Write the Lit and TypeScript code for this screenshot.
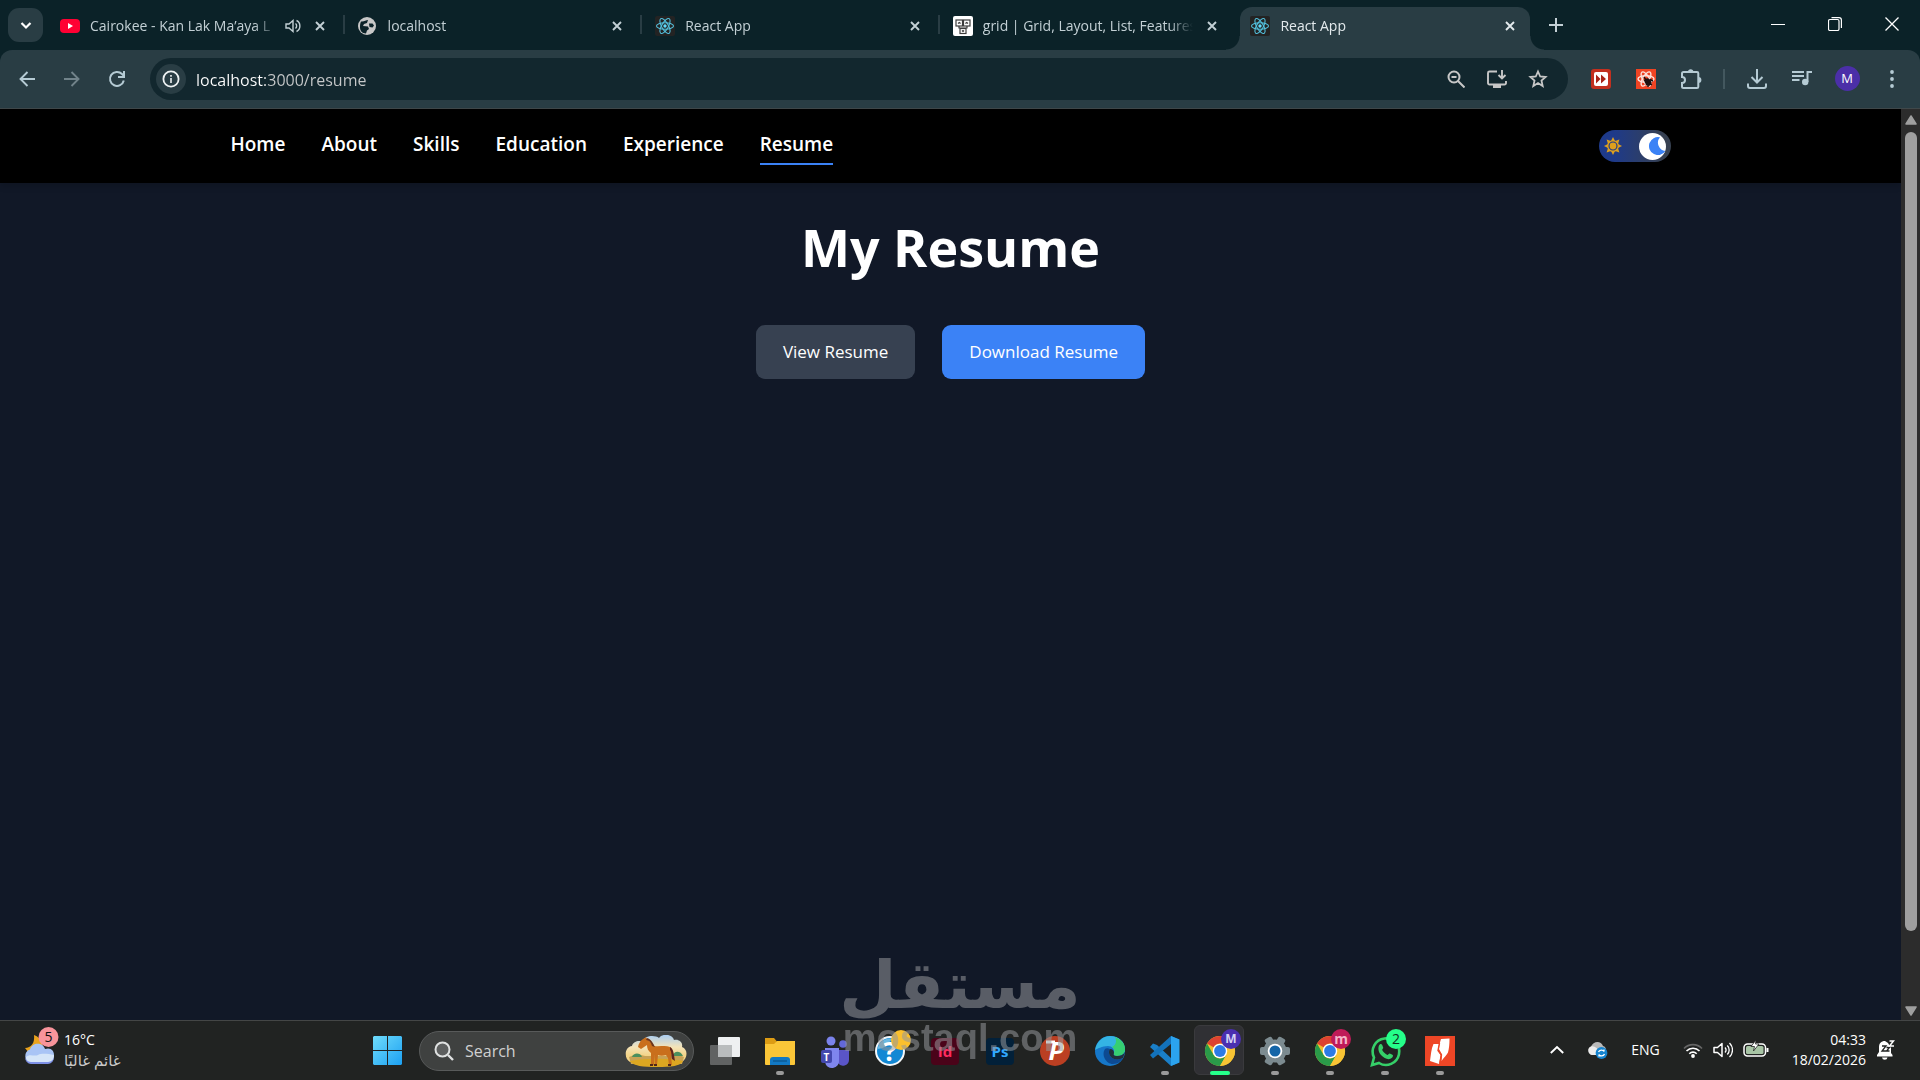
import { LitElement, html, svg, css, TemplateResult } from "lit";
import { customElement, property, state } from "lit/decorators.js";
import { classMap } from "lit/directives/class-map.js";

const icon = (size: number, box: string, body: unknown, height = size) =>
  html`<svg class="icon" width=${size} height=${height} viewBox=${box} fill="none" aria-hidden="true">${body}</svg>`;

const close = icon(12, "0 0 12 12", svg`<path d="M2 2l8 8M10 2l-8 8" stroke="currentColor" stroke-width="1.9"/>`);

const youtube = icon(20, "0 0 20 20", svg`<rect y="3" width="20" height="14" rx="4" fill="#ff0033"/><path d="M8 7l5 3-5 3z" fill="#fff"/>`);

const globe = icon(20, "0 0 20 18", svg`
  <circle cx="9" cy="9" r="9" fill="#c7c7c7"/>
  <path d="M3 4.500c3 .5 5-1.500 7-1.500l-1 3-3 1-1 2 5 .5 1 2.500-2 1.500-1 3c-4 0-6-3-6-6 0-2 0-4 1-6z" fill="#0b2228"/>
  <path d="M11 6.500l3.500 0 1.500 2-1.500 2-3-.5z" fill="#0b2228"/>`, 18);

const react = icon(20, "0 0 20 20", svg`
  <rect width="20" height="20" rx="2" fill="#232323"/>
  <g stroke="#53c1de" stroke-width="1.1">
    <ellipse cx="10" cy="10" rx="8.500" ry="3.300"/>
    <ellipse cx="10" cy="10" rx="8.500" ry="3.300" transform="rotate(60 10 10)"/>
    <ellipse cx="10" cy="10" rx="8.500" ry="3.300" transform="rotate(120 10 10)"/>
  </g><circle cx="10" cy="10" r="1.700" fill="#61dafb"/>`);

const gridFav = icon(20, "0 0 20 20", svg`
  <rect width="20" height="20" rx="2" fill="#fff"/>
  <g stroke="#3c3c3c" stroke-width="1.200">
    <rect x="3" y="4" width="6.500" height="6"/><rect x="10.500" y="4" width="6.500" height="6"/>
    <rect x="7" y="12.500" width="6" height="5"/><path d="M5 7.500l1.300-1 1.300 1M12.400 7.500l1.300-1 1.300 1M9 14.500l1 1 1-1M6 10v2h8v-2"/>
  </g>`);

const speaker = icon(16, "0 0 16 16", svg`
  <path d="M1 6h3l4-3.500v11L4 10H1z" stroke="currentColor" stroke-width="1.400"/>
  <path d="M10.500 5.500c1.500 1.200 1.500 3.800 0 5M11.500 2.500c4.500 2 4.500 9 0 11" stroke="currentColor" stroke-width="1.400"/>`);

interface Tab { title: string; icon: TemplateResult; audio?: boolean }

const TABS: Tab[] = [
  { title: "Cairokee - Kan Lak Ma’aya L", icon: youtube, audio: true },
  { title: "localhost", icon: globe },
  { title: "React App", icon: react },
  { title: "grid | Grid, Layout, List, Features", icon: gridFav },
  { title: "React App", icon: react },
];

const shared = css`
  *, *::before, *::after { box-sizing: border-box; }
  button { font: inherit; color: inherit; background: none; border: 0; padding: 0; margin: 0; }
  .icon { display: block; flex: none; }
`;

@customElement("browser-tabs")
class BrowserTabs extends LitElement {
  @state() private active = 4;

  static styles = [shared, css`
    :host { display: flex; height: 50px; padding-left: 8px; background: #0b2228; color: #c3d0d5; }
    .list-button { width: 35px; height: 34px; margin: 8px 7px 8px 0; border-radius: 11px; background: #293d44; display: grid; place-items: center; color: #fff; }
    .tabs { flex: 0 1 1480px; min-width: 0; display: flex; gap: 8px; padding-top: 7px; }
    .tab { position: relative; flex: 1 1 0; min-width: 0; display: flex; align-items: center; gap: 7px; padding: 0 8px 6px 10px; }
    .tab:not(.active):not(.before)::after { content: ""; position: absolute; right: -5px; top: 8px; width: 2px; height: 19px; background: #293d44; }
    .active { background: #293d44; border-radius: 12px 12px 0 0; color: #e3eaed; }
    .active::before, .active::after { content: ""; position: absolute; bottom: 0; width: 14px; height: 14px; }
    .active::before { left: -14px; background: radial-gradient(circle at 0 0, transparent 13px, #293d44 14px); }
    .active::after { right: -14px; background: radial-gradient(circle at 100% 0, transparent 13px, #293d44 14px); }
    .pick { flex: 1; min-width: 0; display: flex; align-items: center; gap: 10px; text-align: left; font-size: 14px; line-height: 20px; }
    .title { flex: 1; min-width: 0; overflow: hidden; white-space: nowrap; mask-image: linear-gradient(90deg, #000 calc(100% - 24px), transparent); }
    .close { width: 24px; height: 24px; display: grid; place-items: center; }
    .new { width: 36px; height: 50px; margin-left: 8px; display: grid; place-items: center; }
    .window { margin-left: auto; display: flex; color: #fff; }
    .window button { width: 57px; height: 48px; display: grid; place-items: center; }
  `];

  render() {
    return html`
      <button class="list-button" aria-label="Search tabs">${icon(12, "0 0 12 12", svg`<path d="M1.500 4L6 8.500 10.500 4" stroke="currentColor" stroke-width="2.200"/>`)}</button>
      <div class="tabs">
        ${TABS.map((tab, i) => html`
          <div class=${classMap({ tab: true, active: i === this.active, before: i === this.active - 1 })}>
            <button class="pick" @click=${() => (this.active = i)}>
              ${tab.icon}<span class="title">${tab.title}</span>
            </button>
            ${tab.audio ? html`<button aria-label="Mute tab">${speaker}</button>` : null}
            <button class="close" aria-label="Close tab">${close}</button>
          </div>`)}
      </div>
      <button class="new" aria-label="New tab">${icon(14, "0 0 14 14", svg`<path d="M7 0v14M0 7h14" stroke="currentColor" stroke-width="2"/>`)}</button>
      <div class="window">
        <button aria-label="Minimise">${icon(14, "0 0 14 14", svg`<path d="M0 7.500h14" stroke="currentColor"/>`)}</button>
        <button aria-label="Restore">${icon(14, "0 0 14 14", svg`<rect x=".5" y="2.500" width="10.500" height="11" rx="1.500" stroke="currentColor" stroke-width="1.200"/><path d="M3.500.6h7.500c1.500 0 2.400 1 2.400 2.400V11" stroke="currentColor" stroke-width="1.200"/>`)}</button>
        <button aria-label="Close window">${icon(14, "0 0 14 14", svg`<path d="M.5.5l13 13M13.500.5l-13 13" stroke="currentColor" stroke-width="1.300"/>`)}</button>
      </div>`;
  }
}

@customElement("browser-toolbar")
class BrowserToolbar extends LitElement {
  static styles = [shared, css`
    :host { display: block; background: #0b2228; }
    .bar { display: flex; align-items: center; gap: 9px; height: 59px; padding: 0 10px 1px 9px; background: #293d44; border-bottom: 1px solid #40484a; border-radius: 12px 12px 0 0; color: #b5cbd4; }
    .tool { flex: none; width: 36px; height: 36px; display: grid; place-items: center; }
    .off { color: #71838a; }
    .omnibox { flex: 1; min-width: 0; height: 42px; margin: 0 6px; padding: 0 10px 0 6px; display: flex; align-items: center; border-radius: 21px; background: #12272e; color: #c7c7c7; }
    .info { width: 30px; height: 30px; border-radius: 50%; display: grid; place-items: center; background: #293d44; color: #eef2f3; }
    .url { flex: 1; min-width: 0; height: 32px; margin-left: 10px; padding: 2px 0 0; border: 0; outline: 0; font: inherit; font-size: 16px; color: transparent; background: linear-gradient(90deg, #fff 69px, #c7c9ca 69px); background-clip: text; }
    .action { width: 41px; height: 36px; display: grid; place-items: center; }
    .rule { flex: none; width: 2px; height: 20px; margin: 0 5px; background: #43585f; }
    .avatar { width: 25px; height: 25px; border-radius: 50%; background: #4b2fa8; color: #fff; font-size: 13px; line-height: 25px; text-align: center; }
  `];

  render() {
    return html`<div class="bar">
      <button class="tool" aria-label="Back">${icon(16, "0 0 16 16", svg`<path d="M16 8H2M8.500 1L1.500 8l7 7" stroke="currentColor" stroke-width="1.900"/>`)}</button>
      <button class="tool off" aria-label="Forward">${icon(16, "0 0 16 16", svg`<path d="M0 8h14M7.500 1l7 7-7 7" stroke="currentColor" stroke-width="1.900"/>`)}</button>
      <button class="tool" aria-label="Reload">${icon(18, "0 0 18 18", svg`<path d="M15.800 10.500A7 7 0 1 1 14 4l2 2" stroke="currentColor" stroke-width="2"/><path d="M16 1v6h-6" stroke="currentColor" stroke-width="2"/>`)}</button>
      <div class="omnibox">
        <button class="info" aria-label="Site information">${icon(18, "0 0 18 18", svg`<circle cx="9" cy="9" r="7.600" stroke="currentColor" stroke-width="1.800"/><path d="M9 8v5M9 5v1.800" stroke="currentColor" stroke-width="1.600"/>`)}</button>
        <input class="url" type="text" aria-label="Address" value="localhost:3000/resume" spellcheck="false" />
        <button class="action" aria-label="Zoom">${icon(18, "0 0 18 18", svg`<circle cx="7" cy="7" r="5.500" stroke="currentColor" stroke-width="2"/><path d="M11 11l6.500 6.500M4.500 7h5" stroke="currentColor" stroke-width="2"/>`)}</button>
        <button class="action" aria-label="Install app">${icon(22, "0 0 22 20", svg`<path d="M11 2.500H3.500A1.500 1.500 0 0 0 2 4v10a1.500 1.500 0 0 0 1.500 1.500h15A1.500 1.500 0 0 0 20 14v-2M16 1v8M12.500 6L16 9.500 19.500 6" stroke="currentColor" stroke-width="1.900"/><path d="M7 15h8v4H7z" fill="currentColor"/>`, 20)}</button>
        <button class="action" aria-label="Bookmark">${icon(20, "0 0 20 20", svg`<path d="M10 2.500l2.200 5 5.400.5-4.100 3.600 1.200 5.400-4.700-2.900L5.300 17l1.200-5.400L2.400 8l5.400-.5z" stroke="currentColor" stroke-width="1.800"/>`)}</button>
      </div>
      <button class="tool" aria-label="Video speed extension">${icon(20, "0 0 20 20", svg`<rect width="20" height="20" rx="3" fill="#c2301f"/><rect x="3" y="3" width="14" height="14" rx="2" fill="#fff"/><path d="M5 5.500l4.500 4.500L5 14.500zM10 5.500l5 4.500-5 4.500z" fill="#a82418"/>`)}</button>
      <button class="tool" aria-label="React developer tools">${icon(22, "0 0 22 22", svg`
        <rect x="1" y="1" width="20" height="20" fill="#ef4423"/>
        <g stroke="#fbe3dd" stroke-width="1.400"><ellipse cx="11" cy="11" rx="8" ry="3.300"/><ellipse cx="11" cy="11" rx="8" ry="3.300" transform="rotate(60 11 11)"/><ellipse cx="11" cy="11" rx="8" ry="3.300" transform="rotate(120 11 11)"/></g>
        <ellipse cx="13" cy="14" rx="3" ry="4" transform="rotate(-35 13 14)" fill="#1c1111"/><path d="M9 12l8 5M11 17l5-6M9 9l2 3M12 18l2 0M16 12l2 1" stroke="#1c1111" stroke-width="1.400"/>`)}</button>
      <button class="tool" aria-label="Extensions">${icon(22, "0 0 22 22", svg`<path d="M2 5.500A1.500 1.500 0 0 1 3.500 4H17a1.300 1.300 0 0 1 1.300 1.300v13.400A1.300 1.300 0 0 1 17 20H3.500A1.500 1.500 0 0 1 2 18.500V15c4 0 4-6 0-6z" stroke="currentColor" stroke-width="2"/><path d="M8 4a2.700 2.700 0 0 1 5.400 0zM18.500 9a2.900 2.900 0 0 1 0 5.800z" fill="currentColor"/>`)}</button>
      <span class="rule"></span>
      <button class="tool" aria-label="Downloads">${icon(20, "0 0 20 20", svg`<path d="M10 0v13M4.500 8l5.500 5.500L15.500 8M1 14.500V17a2 2 0 0 0 2 2h14a2 2 0 0 0 2-2v-2.500" stroke="currentColor" stroke-width="2"/>`)}</button>
      <button class="tool" aria-label="Media controls">${icon(20, "0 0 20 20", svg`<path d="M0 3h12M0 7h12M0 11h7.500M15.500 13V3H20" stroke="currentColor" stroke-width="2"/><circle cx="13.200" cy="13" r="3.200" fill="currentColor"/>`)}</button>
      <button class="tool" aria-label="Profile"><span class="avatar">M</span></button>
      <button class="tool" aria-label="Menu">${icon(4, "0 0 4 18", svg`<circle cx="2" cy="2" r="1.900" fill="currentColor"/><circle cx="2" cy="9" r="1.900" fill="currentColor"/><circle cx="2" cy="16" r="1.900" fill="currentColor"/>`, 18)}</button>
    </div>`;
  }
}

@customElement("resume-page")
class ResumePage extends LitElement {
  @state() private dark = true;

  static styles = [shared, css`
    :host { display: flex; min-width: 0; background: #111827; color: #fff; }
    .page { flex: 1; min-width: 0; }
    .nav { background: #000; box-shadow: 0 4px 6px rgba(0, 0, 0, 0.12); }
    .inner { max-width: 1440px; margin: 0 auto; padding: 21px 0 18px; display: flex; justify-content: space-between; align-items: flex-start; }
    .links { display: flex; gap: 36px; margin: 0; padding: 0; list-style: none; }
    .link { display: block; padding-bottom: 5px; border-bottom: 2px solid transparent; font-size: 19px; line-height: 28px; font-weight: 600; color: #fff; text-decoration: none; }
    .current { border-color: #3b82f6; }
    .switch { position: relative; display: flex; align-items: center; width: 72px; height: 32px; padding: 0 5px; border-radius: 16px; background: linear-gradient(90deg, #1e3a8a 20%, #374151 90%); }
    .check { position: absolute; inset: 0; width: 100%; height: 100%; margin: 0; opacity: 0; }
    .knob { margin-left: auto; width: 27px; height: 27px; border-radius: 50%; background: #fff; display: grid; place-items: center end; overflow: hidden; }
    .main { display: flex; flex-direction: column; align-items: center; padding: 32px 24px; }
    .heading { margin: 0; font-size: 52px; line-height: 64px; font-weight: 700; }
    .actions { display: flex; gap: 27px; margin-top: 46px; }
    .button { padding: 13px 27px; border-radius: 9px; background: #374151; font-size: 17px; line-height: 28px; color: #fff; text-decoration: none; }
    .primary { background: #3b82f6; }
    .scroll { flex: none; width: 19px; display: flex; flex-direction: column; align-items: center; padding: 6px 0 4px; background: #2c2c2c; color: #9f9f9f; }
    .track { flex: 1; width: 12px; margin: 7px 0 6px; }
    .thumb { height: 92%; border-radius: 6px; background: #9f9f9f; }
  `];

  render() {
    const links = ["Home", "About", "Skills", "Education", "Experience", "Resume"];
    return html`
      <div class="page">
        <nav class="nav"><div class="inner">
          <ul class="links">${links.map((name) => html`<li><a class=${classMap({ link: true, current: name === "Resume" })} href="#${name.toLowerCase()}">${name}</a></li>`)}</ul>
          <label class="switch">
            <input class="check" type="checkbox" aria-label="Dark mode" .checked=${this.dark} @change=${() => (this.dark = !this.dark)} />
            <span>${icon(18, "0 0 18 18", svg`<g fill="#dea01e"><path d="M9 0l2 4H7zM9 18l2-4H7zM0 9l4-2v4zM18 9l-4-2v4zM2.600 2.600l4.300 1.400-2.900 2.900zM15.400 15.400l-4.300-1.400 2.900-2.900zM2.600 15.400l1.400-4.300 2.900 2.900zM15.400 2.600l-1.400 4.300-2.900-2.900z"/></g><circle cx="9" cy="9" r="5.200" stroke="#dea01e" stroke-width="1.300"/><circle cx="9" cy="9" r="3.400" fill="#dea01e"/>`)}</span>
            <span class="knob">${icon(17, "0 0 17 18", svg`<path d="M11 .3A9 9 0 1 0 16.500 14 8.300 8.300 0 0 1 11 .3z" fill="#3b82f6"/>`, 18)}</span>
          </label>
        </div></nav>
        <main class="main">
          <h1 class="heading">My Resume</h1>
          <div class="actions">
            <a class="button" href="#view">View Resume</a>
            <a class="button primary" href="#download">Download Resume</a>
          </div>
        </main>
      </div>
      <div class="scroll">
        ${icon(12, "0 0 12 10", svg`<path d="M6 1l5 8H1z" fill="currentColor" stroke="currentColor" stroke-width="1.500" stroke-linejoin="round"/>`, 10)}
        <div class="track"><div class="thumb"></div></div>
        ${icon(12, "0 0 12 10", svg`<path d="M6 9l5-8H1z" fill="currentColor" stroke="currentColor" stroke-width="1.500" stroke-linejoin="round"/>`, 10)}
      </div>`;
  }
}

const chrome = svg`
  <circle cx="15" cy="15" r="15" fill="#f3bf2d"/>
  <path d="M2 7.500A15 15 0 0 1 28 7.500H15a7.500 7.500 0 0 0-6.500 3.800z" fill="#dd4231"/>
  <path d="M2 7.500A15 15 0 0 0 15 30l6.500-11.300a7.500 7.500 0 0 1-13 0z" fill="#2a9a49"/>
  <path d="M28 7.500H15a7.500 7.500 0 0 1 6.500 11.300L15 30A15 15 0 0 0 28 7.500z" fill="#f8c434"/>
  <circle cx="15" cy="15" r="7.300" fill="#fff"/><circle cx="15" cy="15" r="5.900" fill="#2c7be5"/>`;

interface App {
  name: string;
  art: unknown;
  running?: boolean;
  active?: boolean;
  badge?: string;
  tone?: string;
}

const APPS: App[] = [
  { name: "Task view", art: svg`<rect x="8" y="1" width="22" height="20" rx="1" fill="#eef0f1"/><rect x="0" y="9" width="22" height="20" rx="1" fill="#77797a" opacity=".75"/><path d="M8 9h14v12H8z" fill="#b9bcbd"/>` },
  { name: "File Explorer", running: true, art: svg`<path d="M0 2h9l3 3.500V10H0z" fill="#dd9c14"/><path d="M0 8l9 0 3-3h18v23a1 1 0 0 1-1 1H1a1 1 0 0 1-1-1z" fill="#fbc638"/><path d="M5 29v-5a3 3 0 0 1 3-3h14a3 3 0 0 1 3 3v5z" fill="#1279c4"/><path d="M8 25h14" stroke="#0b558e" stroke-width="1.300"/>` },
  { name: "Teams", art: svg`<circle cx="11" cy="5" r="4.500" fill="#7b83eb"/><circle cx="23" cy="8" r="3.800" fill="#6268d8"/><path d="M18 14h11v10a6 6 0 0 1-11 3z" fill="#5a55c8"/><path d="M5 12h14v12a6 6 0 0 1-14 2z" fill="#7f86ee"/><rect x="1" y="14" width="11" height="13" rx="2" fill="#4348ad"/><text x="6.500" y="24.500" font-size="10" font-weight="700" text-anchor="middle" fill="#fff">T</text>` },
  { name: "Get Help", art: svg`<circle cx="15" cy="15" r="14" fill="#1288d4" stroke="#f4f8fa" stroke-width="2"/><path d="M2.500 13A12.500 12.500 0 0 1 18 3c-5 2-4 9-15.500 10z" fill="#6bb9e2"/><text x="15" y="25" font-size="27" font-weight="700" text-anchor="middle" fill="#fff">?</text><circle cx="26" cy="4" r="10" fill="#fbc02d"/>` },
  { name: "InDesign", art: svg`<rect x="1" y="2" width="28" height="27" rx="4" fill="#4a0319"/><text x="15" y="21" font-size="15" font-weight="700" text-anchor="middle" fill="#ff2c60">Id</text>` },
  { name: "Photoshop", art: svg`<rect x="1" y="2" width="28" height="27" rx="4" fill="#022039"/><text x="15" y="21" font-size="15" font-weight="700" text-anchor="middle" fill="#31a8ff">Ps</text>` },
  { name: "Psiphon", art: svg`<circle cx="15" cy="15" r="15" fill="#bb3f22"/><text x="16" y="24" font-size="25" font-weight="700" font-style="italic" text-anchor="middle" fill="#fff">P</text><path d="M6 6h9" stroke="#fff" stroke-width="3"/>` },
  { name: "Edge", art: svg`
      <circle cx="15" cy="15" r="15" fill="#1677c9"/>
      <path d="M0 14C2 5 8 0 15 0c9 0 15 6 15 13 0 5-4 7-8 7-3 0-4-1-3-3 1-4-2-7-6-7-6 0-11 3-13 4z" fill="#34b4e4"/>
      <path d="M20 1c6 2 10 7 10 12 0 5-4 7-8 7-3 0-4-1-3-3 1-3 0-5-2-6 4-2 5-6 3-10z" fill="#36cf72"/>
      <path d="M10 13c-4 6 1 15 8 15 5 0 8-3 10-6-6 3-13 1-14-5-.2-2 0-3 1-4-2-1-4-1-5 0z" fill="#0d4a92"/>
      <path d="M19 17c-1 2 0 3 3 3 3 0 6-1 8-4l-2 6c-6 3-13 1-14-5 0-2 0-3 1-4 3 0 4 2 4 4z" fill="#21303a"/>` },
  { name: "VS Code", running: true, art: svg`<path d="M21 0l8 3.500v23L21 30 0 11l3-3.500 4 1.500L21 22z" fill="#1a7fc8"/><path d="M21 8L3 22.500 0 19 21 0z" fill="#1372bb"/><path d="M21 0l8.500 3.500v23L21 30z" fill="#2ba3ee"/>` },
  { name: "Chrome, M", running: true, active: true, badge: "M", tone: "violet", art: chrome },
  { name: "Settings", running: true, art: svg`<g fill="#7c8b90"><circle cx="15" cy="15" r="11.500"/><rect x="11" y="0" width="8" height="30" rx="2" transform="rotate(90 15 15)"/><rect x="11" y="0" width="8" height="30" rx="2" transform="rotate(30 15 15)"/><rect x="11" y="0" width="8" height="30" rx="2" transform="rotate(-30 15 15)"/></g><circle cx="15" cy="15" r="7.300" fill="#fff"/><circle cx="15" cy="15" r="5.500" fill="#1566a8"/>` },
  { name: "Chrome, m", running: true, badge: "m", tone: "rose", art: chrome },
  { name: "WhatsApp", running: true, badge: "2", tone: "green", art: svg`<path d="M2 29l2-7.500A13.300 13.300 0 1 1 9 27z" stroke="#35cf68" stroke-width="2.600"/><path d="M9 9.500c1-2 2.500-2 3.200-.5l1 2.500c.3.800-1.200 2-1 2.600 1 2 3 4 5.200 4.800.6.200 1.600-1.700 2.400-1.400l2.600 1.300c1 .5.600 2-.4 3-3 3-8 .5-10.500-2.300C9 17 7.500 13 9 9.500z" fill="#35cf68"/>` },
  { name: "Nitro", running: true, art: svg`<rect width="30" height="30" fill="#ee4626"/><path d="M8.500 8l5.500 0-1 6.500 2.500 4.500-1.500 9-9-3c1-6 1-12 3.500-17z" fill="#fff"/><path d="M16 3l8.500-.5c0 6-.5 10-1.500 14-1.500 3-4 5-6.500 8.500l.5-6.500-3-5.500c0-3 1-7 2-10z" fill="#fff"/><path d="M14.500 7l-1.500 7.500 3.500 4.500-1.500 8" stroke="#ee4626" stroke-width="1.400"/>` },
];

const horse = html`<svg class="icon" width="62" height="32" viewBox="0 0 62 32" fill="none" aria-hidden="true">
  <defs><linearGradient id="sky" x1="0" y1="0" x2="0" y2="1"><stop offset="0" stop-color="#a9cdf2"/><stop offset=".45" stop-color="#f4e3b8"/><stop offset=".75" stop-color="#f3d489"/></linearGradient></defs>
  <path d="M5 27C-1 24 -1 12 7 11c1-5 8-6 10-4C20 0 30 0 34 3c3-5 14-4 15 2 6-1 9 3 8 7 6 2 6 11 0 15z" fill="url(#sky)"/>
  <path d="M4 22l8-3 8 2 20 0 12-2 7 3-2 7H6z" fill="#c8a255"/>
  <path d="M7 22c1-4 8-5 10 0zM48 21c1-6 8-5 10 0z" fill="#4b8f5e"/>
  <path d="M5 26c16-3 40-3 53 0-2 5-12 6-26 6S8 31 5 26z" fill="#dca721"/>
  <path d="M13 12c1-5 4-8 7-9l1-1 1 2c3 2 5 5 7 7 6 1 11-1 16 1 3 2 3 6 1 9l1 9h-3l-1-7-2-3c-3 1-6 1-8 0l-1 10h-2l0-10-1 10h-3l0-12c-3-2-4-5-4-8l-6 4z" fill="#c96f1c"/>
  <path d="M22 3c4 1 6 5 8 9l-3-1c-1-4-3-6-6-6z" fill="#6c351b"/>
  <path d="M45 12c4 2 4 9 5 14l-3-2c-1-4 0-7-2-9z" fill="#5f241c"/>
  <path d="M25 30h3M29 30h3M43 30h3" stroke="#522819" stroke-width="2"/>
</svg>`;

@customElement("desktop-taskbar")
class DesktopTaskbar extends LitElement {
  @property() time = "04:33";

  static styles = [shared, css`
    :host { display: grid; grid-template-columns: 360px 1fr auto; height: 60px; padding-right: 25px; background: #212322; border-top: 1px solid #444646; color: #fff; }
    .weather { display: flex; align-items: center; gap: 4px; padding: 0 0 2px 24px; font-size: 14px; line-height: 20px; text-align: left; }
    .lines { display: flex; flex-direction: column; }
    .arabic { font-family: "Open Sans", "DejaVu Sans", sans-serif; font-size: 15px; color: #c9c9c9; }
    .apps { display: flex; align-items: center; min-width: 0; }
    .app { position: relative; flex: none; width: 55px; height: 59px; display: grid; place-items: center; font-family: "Open Sans", sans-serif; }
    .app .icon { position: relative; overflow: visible; }
    .plate { position: absolute; inset: 4px 3px 5px 2px; border-radius: 6px; background: #303034; border: 1px solid #3a3a3d; }
    .running::after { content: ""; position: absolute; bottom: 5px; left: 50%; width: 8px; height: 4px; margin-left: -4px; border-radius: 2px; background: #9a9a9a; }
    .active::after { width: 20px; margin-left: -10px; background: #25ff8a; }
    .badge { position: absolute; top: 8px; left: 29px; width: 20px; height: 20px; border-radius: 50%; font-size: 14px; line-height: 20px; text-align: center; }
    .violet { background: #4a2fb0; color: #d5d2f5; font-weight: 700; font-size: 12px; }
    .rose { background: #bf1b58; color: #f5b4c8; font-weight: 700; }
    .green { background: #25ff8a; color: #10301f; }
    .search { flex: 0 1 275px; min-width: 0; height: 40px; margin: 0 3px 0 4px; padding: 0 6px 0 14px; display: flex; align-items: center; border: 1px solid #585a5a; border-radius: 20px; background: #3f4140; }
    .query { flex: 1 1 0; width: 0; min-width: 0; margin-left: 11px; padding: 0; border: 0; outline: 0; background: none; font: inherit; font-size: 16px; color: #fff; }
    .query::placeholder { color: #cfd0d0; opacity: 1; }
    .tray { display: flex; align-items: center; gap: 23px; padding-bottom: 2px; font-size: 14px; line-height: 20px; }
    .status { display: flex; align-items: center; gap: 10px; }
    .clock { text-align: right; }
  `];

  render() {
    return html`
      <button class="weather">
        ${icon(36, "0 0 36 46", svg`
          <path d="M1 21c6 0 10-5 9-13 8 3 10 11 8 18H5z" fill="#eaa31d"/>
          <path d="M7 36a7 7 0 0 1-1-13.500C8 15 19 15 21 22c6-2 9 2 9 6s-2 8-6 8z" fill="#a9c4f5"/>
          <path d="M2 30c4-4 8 0 12-2s10-1 16 0c0 5-2 8-6 8H7c-3 0-5-3-5-6z" fill="#d5e5f8"/>
          <path d="M1 30c1 4 4 5 7 5h15c3 0 6-1 7-5 0 4-3 7-6 7H7c-3 0-6-3-6-7z" fill="#7d90e6"/>
          <circle cx="24.500" cy="10" r="10" fill="#f8949b"/>
          <text x="24.500" y="15" font-size="14" text-anchor="middle" fill="#111">5</text>`, 46)}
        <span class="lines"><span>16°C</span><span class="arabic" dir="rtl" lang="ar">غائم غالبًا</span></span>
      </button>
      <div class="apps">
        <button class="app" aria-label="Start">${icon(29, "0 0 29 29", svg`<defs><linearGradient id="win" x1="0" y1="0" x2="1" y2="1"><stop offset="0" stop-color="#6fdcfb"/><stop offset="1" stop-color="#1ca0f2"/></linearGradient></defs><path d="M1 0h13v14H0V1zM15 0h13l1 1v13H15zM0 15h14v14H1l-1-1zM15 15h14v13l-1 1H15z" fill="url(#win)"/>`)}</button>
        <div class="search">
          ${icon(20, "0 0 20 20", svg`<circle cx="8.500" cy="8.500" r="7" fill="#5d5f5f" stroke="#dfe1e1" stroke-width="2"/><path d="M14 14l5 5" stroke="#dfe1e1" stroke-width="2.400"/>`)}
          <input class="query" type="search" aria-label="Search" placeholder="Search" />
          ${horse}
        </div>
        ${APPS.map((app) => html`
          <button class=${classMap({ app: true, running: !!app.running, active: !!app.active })} aria-label=${app.name}>
            ${app.active ? html`<span class="plate"></span>` : null}
            ${icon(30, "0 0 30 30", app.art)}
            ${app.badge ? html`<span class="badge ${app.tone}">${app.badge}</span>` : null}
          </button>`)}
      </div>
      <div class="tray">
        <button aria-label="Hidden icons">${icon(14, "0 0 14 14", svg`<path d="M.8 10L7 4l6.200 6" stroke="currentColor" stroke-width="1.900"/>`)}</button>
        <button aria-label="OneDrive">${icon(21, "0 0 21 20", svg`<path d="M5 15a4.500 4.500 0 0 1-1-8.500C6 1 14 0 16 6c4 1 4 7 1 9z" fill="#b9b9b9"/><path d="M4 6.500c4-1 6 2 8 4l-3 4.500H5a4.500 4.500 0 0 1-1-8.500z" fill="#ececec"/><circle cx="14.500" cy="13" r="5.900" fill="#1584d0"/><path d="M11.500 12c1-2.500 4.500-2.500 5.500-.5v-2M17.500 14c-1 2.500-4.500 2.500-5.500.5v2" stroke="#fff" stroke-width="1.300"/>`, 20)}</button>
        <button>ENG</button>
        <span class="status">
          ${icon(20, "0 0 20 16", svg`<path d="M1 6.500a12.500 12.500 0 0 1 18 0" stroke="#666" stroke-width="1.600"/><path d="M3.500 9a9 9 0 0 1 13 0M6.300 11.700a5.200 5.200 0 0 1 7.400 0" stroke="#fff" stroke-width="1.600"/><circle cx="10" cy="14" r="1.900" fill="#fff"/>`, 16)}
          ${icon(20, "0 0 20 18", svg`<path d="M1 6.500h3.500L9 2.500v13l-4.500-4H1z" stroke="#fff" stroke-width="1.500" stroke-linejoin="round"/><path d="M12 6.500c1.300 1.500 1.300 3.500 0 5M14.300 4.500c2.500 2.500 2.500 6.500 0 9M16.500 2c4 4 4 10 0 14" stroke="#fff" stroke-width="1.300"/>`, 18)}
          ${icon(26, "0 0 26 20", svg`<rect x="1" y="4" width="21.500" height="12" rx="3.500" stroke="#fff" stroke-width="1.500"/><path d="M24.500 8v4" stroke="#fff" stroke-width="2"/><rect x="3" y="6" width="17.500" height="8" rx="1.500" fill="#a8c5a5"/><path d="M13 0l-5 6.500h3.500L10.500 11l5.500-7h-3.500z" fill="#fff" stroke="#212322" stroke-width=".8"/>`, 20)}
        </span>
        <span class="status">
          <span class="clock">${this.time}<br />18/02/2026</span>
          ${icon(19, "0 0 19 20", svg`<path d="M9 1c-4 0-6 2.500-6 6v5l-2 3v1.500h15.500V15l-1.500-2V8l-3-5z" fill="#fff"/><path d="M6 17.500h5.500a2.800 2.800 0 0 1-5.500 0z" fill="#fff"/><path d="M6 6h4l-4 5h4.500M10.500 7.500h3l-3 3.500h3" stroke="#212322" stroke-width="1.300"/><path d="M13.500 1h4l-4 5h4.500" stroke="#fff" stroke-width="1.500"/>`, 20)}
        </span>
      </div>`;
  }
}

@customElement("app-root")
class AppRoot extends LitElement {
  static styles = [shared, css`
    :host { display: block; font-family: "Open Sans", "Noto Sans", sans-serif; }
    .desktop { position: relative; display: flex; flex-direction: column; min-height: 100vh; }
    .page { flex: 1; }
    .mark { position: absolute; left: 0; right: 0; bottom: 20px; display: flex; flex-direction: column; align-items: center; color: #95979a; opacity: 0.55; pointer-events: none; font-weight: 700; }
    .word { font-family: "DejaVu Sans", sans-serif; font-size: 66px; line-height: 60px; }
    .domain { font-family: "Liberation Sans", sans-serif; font-size: 38px; line-height: 44px; }
  `];

  render() {
    return html`
      <div class="desktop">
        <browser-tabs></browser-tabs>
        <browser-toolbar></browser-toolbar>
        <resume-page class="page"></resume-page>
        <desktop-taskbar></desktop-taskbar>
        <div class="mark"><span class="word" lang="ar" dir="rtl">مستقل</span><span class="domain">mostaql.com</span></div>
      </div>`;
  }
}
